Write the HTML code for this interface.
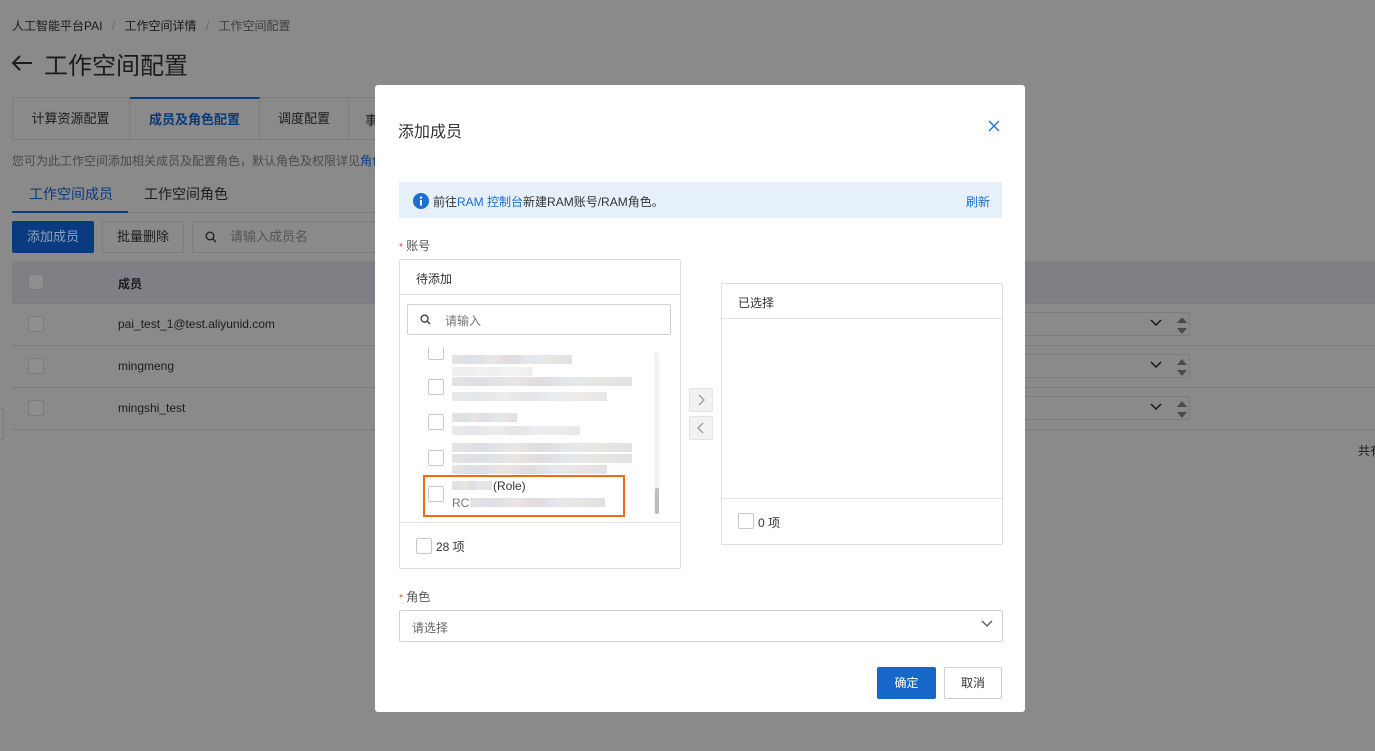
<!DOCTYPE html>
<html><head><meta charset="utf-8"><style>
*{box-sizing:border-box;margin:0;padding:0}
body{width:1375px;height:751px;overflow:hidden;background:#8a8a8a;font-family:"Liberation Sans","Noto Sans CJK SC",sans-serif;color:#1c1c1c;position:relative;font-size:12px}
.a{position:absolute}
.t{white-space:nowrap}
.cb{position:absolute;width:16px;height:16px;border:1px solid #c8c8c8;border-radius:2px;background:#fff}
.bcb{position:absolute;width:16px;height:16px;border:1px solid #7c7c7c;background:#8e8e8e}
.blur{position:absolute;height:9px;background:linear-gradient(90deg,#e3dfe0,#d8dce4,#e7e3df,#dcd8dc,#e1e6ec,#e6e3de,#dcdde3);opacity:.9}
</style></head><body>
<div class="a t" style="left:12px;top:17px;font-size:12px;color:#1a1a1a">人工智能平台PAI <span style="color:#6a6a6a;margin:0 6px">/</span> 工作空间详情 <span style="color:#6a6a6a;margin:0 6px">/</span> <span style="color:#3e3e3e">工作空间配置</span></div>
<svg class="a" style="left:11px;top:54px" width="22" height="18" viewBox="0 0 22 18"><path d="M21 9H2M9 2L2 9l7 7" fill="none" stroke="#1c1c1c" stroke-width="2"/></svg>
<div class="a t" style="left:44px;top:46px;font-size:24px;color:#1c1c1c">工作空间配置</div>
<div class="a" style="left:12px;top:97px;width:370px;height:43px;border:1px solid #7c7c7c;border-right:none"></div>
<div class="a t" style="left:12px;top:97px;width:118px;height:43px;border-right:1px solid #7c7c7c;line-height:43px;text-align:center;font-size:13px">计算资源配置</div>
<div class="a t" style="left:130px;top:97px;width:130px;height:43px;border-top:2px solid #083e85;border-right:1px solid #7c7c7c;line-height:41px;text-align:center;font-size:13px;color:#0a3a7a;font-weight:bold">成员及角色配置</div>
<div class="a t" style="left:260px;top:97px;width:89px;height:43px;border-right:1px solid #7c7c7c;line-height:43px;text-align:center;font-size:13px">调度配置</div>
<div class="a t" style="left:365px;top:110px;font-size:13px">事</div>
<div class="a t" style="left:12px;top:152px;color:#4a4a4a">您可为此工作空间添加相关成员及配置角色，默认角色及权限详见<span style="color:#083e85">角色</span></div>
<div class="a t" style="left:29px;top:184px;font-size:14px;color:#0a3a7a">工作空间成员</div>
<div class="a t" style="left:144px;top:184px;font-size:14px">工作空间角色</div>
<div class="a" style="left:12px;top:211px;width:116px;height:2px;background:#083e85"></div>
<div class="a" style="left:128px;top:212px;width:250px;height:1px;background:#7c7c7c"></div>
<div class="a t" style="left:12px;top:221px;width:82px;height:32px;background:#0a3a80;color:#8fa2bf;line-height:32px;text-align:center;font-size:13px;border-radius:2px">添加成员</div>
<div class="a t" style="left:102px;top:221px;width:82px;height:32px;border:1px solid #7c7c7c;line-height:30px;text-align:center;font-size:13px">批量删除</div>
<div class="a t" style="left:192px;top:221px;width:190px;height:32px;border:1px solid #7c7c7c;line-height:30px;padding-left:37px;font-size:13px;color:#555">请输入成员名</div>
<svg class="a" style="left:205px;top:231px" width="12" height="12" viewBox="0 0 12 12"><circle cx="5" cy="5" r="3.8" fill="none" stroke="#222" stroke-width="1.4"/><path d="M8 8l3 3" stroke="#222" stroke-width="1.4"/></svg>
<div class="a" style="left:12px;top:261px;width:1363px;height:42px;background:#7f8085"></div>
<div class="bcb" style="left:28px;top:274px"></div>
<div class="a t" style="left:118px;top:275px;font-weight:bold;font-size:12px">成员</div>
<div class="a" style="left:12px;top:303px;width:1363px;height:1px;background:#7c7c7c"></div>
<div class="a" style="left:12px;top:345px;width:1363px;height:1px;background:#7c7c7c"></div>
<div class="a" style="left:12px;top:387px;width:1363px;height:1px;background:#7c7c7c"></div>
<div class="a" style="left:12px;top:429px;width:1363px;height:1px;background:#7c7c7c"></div>
<div class="bcb" style="left:28px;top:316px"></div><div class="a t" style="left:118px;top:317px">pai_test_1@test.aliyunid.com</div>
<div class="bcb" style="left:28px;top:358px"></div><div class="a t" style="left:118px;top:359px">mingmeng</div>
<div class="bcb" style="left:28px;top:400px"></div><div class="a t" style="left:118px;top:401px">mingshi_test</div>
<div class="a" style="left:1000px;top:312px;width:190px;height:24px;border:1px solid #7c7c7c;border-left:none"></div>
<div class="a" style="left:1000px;top:354px;width:190px;height:24px;border:1px solid #7c7c7c;border-left:none"></div>
<div class="a" style="left:1000px;top:396px;width:190px;height:24px;border:1px solid #7c7c7c;border-left:none"></div>
<svg class="a" style="left:1148px;top:318px" width="40" height="100" viewBox="0 0 40 100"><g fill="none" stroke="#111" stroke-width="1.4"><path d="M3 2l5 5 5-5"/><path d="M3 44l5 5 5-5"/><path d="M3 86l5 5 5-5"/></g><g fill="#4a4a4a"><path d="M29 4l5-6 5 6z" transform="translate(0,1)"/><path d="M29 10h10l-5 6z"/><path d="M29 47l5-6 5 6z"/><path d="M29 52h10l-5 6z"/><path d="M29 89l5-6 5 6z"/><path d="M29 94h10l-5 6z"/></g></svg>
<div class="a t" style="left:1358px;top:442px;font-size:12px">共有</div>
<div class="a" style="left:0;top:408px;width:4px;height:32px;border:1px solid #7c7c7c;border-left:none"></div>

<div class="a" style="left:375px;top:85px;width:650px;height:627px;background:#fff;border-radius:3px"></div>
<div class="a t" style="left:398px;top:118px;font-size:16px;color:#333">添加成员</div>
<svg class="a" style="left:988px;top:120px" width="12" height="12" viewBox="0 0 12 12"><path d="M1 1l10 10M11 1L1 11" stroke="#1b6fd1" stroke-width="1.3"/></svg>
<div class="a" style="left:399px;top:182px;width:603px;height:36px;background:#e6f0fb"></div>
<svg class="a" style="left:413px;top:193px" width="16" height="16" viewBox="0 0 16 16"><circle cx="8" cy="8" r="8" fill="#1b6fd1"/><rect x="7" y="7" width="2" height="5.5" fill="#fff"/><circle cx="8" cy="4.6" r="1.2" fill="#fff"/></svg>
<div class="a t" style="left:433px;top:193px;color:#333">前往<span style="color:#1b6fd1">RAM 控制台</span>新建RAM账号/RAM角色。</div>
<div class="a t" style="left:966px;top:193px;color:#1b6fd1">刷新</div>
<div class="a t" style="left:399px;top:237px;color:#555"><span style="color:#e84040;font-size:10px">*</span> 账号</div>
<div class="a" style="left:399px;top:259px;width:282px;height:310px;border:1px solid #dedede;border-radius:2px"></div>
<div class="a t" style="left:416px;top:270px;color:#333">待添加</div>
<div class="a" style="left:400px;top:294px;width:280px;height:1px;background:#e3e3e3"></div>
<div class="a" style="left:407px;top:304px;width:264px;height:31px;border:1px solid #d0d0d0;border-radius:2px"></div>
<svg class="a" style="left:420px;top:314px" width="11" height="11" viewBox="0 0 12 12"><circle cx="5" cy="5" r="3.8" fill="none" stroke="#333" stroke-width="1.4"/><path d="M8 8l3 3" stroke="#333" stroke-width="1.4"/></svg>
<div class="a t" style="left:445px;top:312px;color:#777">请输入</div>
<div class="a" style="left:654px;top:352px;width:5px;height:162px;background:#f2f2f2;border-radius:3px"></div>
<div class="a" style="left:655px;top:488px;width:4px;height:26px;background:#bdbdbd;border-radius:2px"></div>
<div class="cb" style="left:428px;top:348px;height:12px;border-top:none;border-radius:0 0 2px 2px"></div>
<div class="blur" style="left:452px;top:355px;width:120px"></div><div class="blur" style="left:452px;top:367px;width:80px;opacity:.5"></div>
<div class="cb" style="left:428px;top:379px"></div>
<div class="blur" style="left:452px;top:377px;width:180px"></div><div class="blur" style="left:452px;top:392px;width:155px;opacity:.7"></div>
<div class="cb" style="left:428px;top:414px"></div>
<div class="blur" style="left:452px;top:413px;width:65px"></div><div class="blur" style="left:452px;top:426px;width:128px;opacity:.7"></div>
<div class="cb" style="left:428px;top:450px"></div>
<div class="blur" style="left:452px;top:443px;width:180px"></div><div class="blur" style="left:452px;top:454px;width:180px"></div><div class="blur" style="left:452px;top:465px;width:155px"></div>
<div class="a" style="left:423px;top:475px;width:202px;height:42px;border:2px solid #f26a12"></div>
<div class="cb" style="left:428px;top:486px"></div>
<div class="blur" style="left:452px;top:481px;width:40px"></div>
<div class="a t" style="left:493px;top:479px;color:#333">(Role)</div>
<div class="a t" style="left:452px;top:496px;color:#777">RC</div>
<div class="blur" style="left:470px;top:498px;width:135px"></div>
<div class="a" style="left:400px;top:522px;width:280px;height:1px;background:#e3e3e3"></div>
<div class="cb" style="left:416px;top:538px"></div>
<div class="a t" style="left:436px;top:538px;color:#333">28 项</div>
<div class="a" style="left:689px;top:388px;width:24px;height:24px;background:#f2f2f2;border:1px solid #e3e3e3;border-radius:2px"></div>
<div class="a" style="left:689px;top:416px;width:24px;height:24px;background:#f2f2f2;border:1px solid #e3e3e3;border-radius:2px"></div>
<svg class="a" style="left:689px;top:388px" width="24" height="52" viewBox="0 0 24 52"><path d="M10 7l5 5-5 5" fill="none" stroke="#999" stroke-width="1.3"/><path d="M14 35l-5 5 5 5" fill="none" stroke="#999" stroke-width="1.3"/></svg>
<div class="a" style="left:721px;top:283px;width:282px;height:262px;border:1px solid #dedede;border-radius:2px"></div>
<div class="a t" style="left:738px;top:294px;color:#333">已选择</div>
<div class="a" style="left:722px;top:318px;width:280px;height:1px;background:#e3e3e3"></div>
<div class="a" style="left:722px;top:498px;width:280px;height:1px;background:#e3e3e3"></div>
<div class="cb" style="left:738px;top:513px"></div>
<div class="a t" style="left:758px;top:514px;color:#333">0 项</div>
<div class="a t" style="left:399px;top:588px;color:#555"><span style="color:#e84040;font-size:10px">*</span> 角色</div>
<div class="a" style="left:399px;top:610px;width:604px;height:32px;border:1px solid #d0d0d0;border-radius:2px"></div>
<div class="a t" style="left:412px;top:619px;color:#666">请选择</div>
<svg class="a" style="left:981px;top:620px" width="12" height="8" viewBox="0 0 12 8"><path d="M1 1l5 5 5-5" fill="none" stroke="#555" stroke-width="1.3"/></svg>
<div class="a t" style="left:877px;top:667px;width:59px;height:32px;background:#1767c9;color:#fff;text-align:center;line-height:32px;border-radius:2px">确定</div>
<div class="a t" style="left:944px;top:667px;width:58px;height:32px;border:1px solid #d0d0d0;color:#333;text-align:center;line-height:30px;border-radius:2px">取消</div>
</body></html>
